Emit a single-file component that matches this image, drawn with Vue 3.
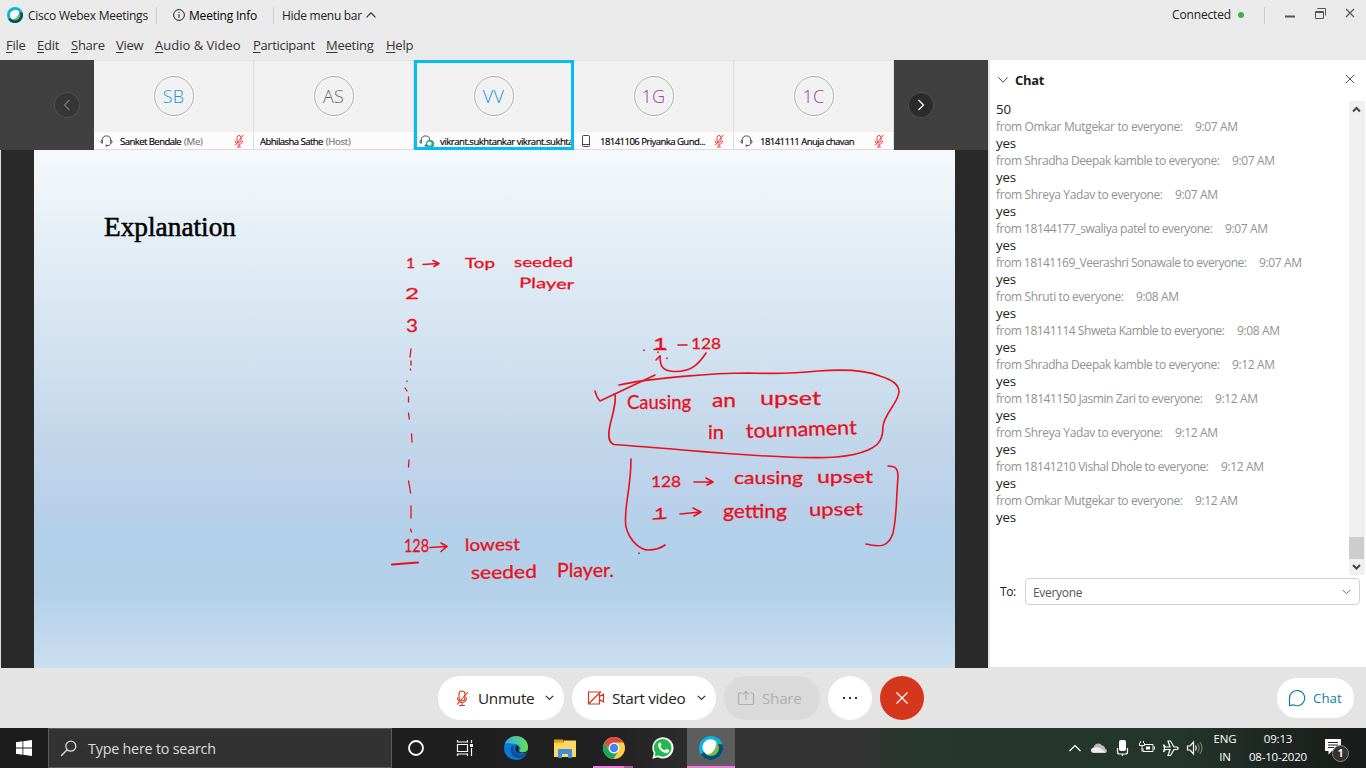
<script setup>
const menus = ['File', 'Edit', 'Share', 'View', 'Audio & Video', 'Participant', 'Meeting', 'Help']
const people = [
  { ini: 'SB', name: 'Sanket Bendale', role: '(Me)', kind: 'headset', tone: 'blue', muted: true },
  { ini: 'AS', name: 'Abhilasha Sathe', role: '(Host)', kind: '', tone: 'grey', muted: false },
  { ini: 'VV', name: 'vikrant.sukhtankar vikrant.sukhta...', role: '', kind: 'headset', tone: 'blue', muted: false, active: true },
  { ini: '1G', name: '18141106 Priyanka Gund...', role: '', kind: 'phone', tone: 'purple', muted: true },
  { ini: '1C', name: '18141111 Anuja chavan', role: '', kind: 'headset', tone: 'purple', muted: true },
]
const chat = [
  ['Omkar Mutgekar', '9:07 AM', 242],
  ['Shradha Deepak kamble', '9:07 AM', 279],
  ['Shreya Yadav', '9:07 AM', 222],
  ['18144177_swaliya patel', '9:07 AM', 272],
  ['18141169_Veerashri Sonawale', '9:07 AM', 306],
  ['Shruti', '9:08 AM', 183],
  ['18141114 Shweta Kamble', '9:08 AM', 284],
  ['Shradha Deepak kamble', '9:12 AM', 279],
  ['18141150 Jasmin Zari', '9:12 AM', 262],
  ['Shreya Yadav', '9:12 AM', 222],
  ['18141210 Vishal Dhole', '9:12 AM', 268],
  ['Omkar Mutgekar', '9:12 AM', 242],
]
// handwritten notes: text, left, baseline, width, size, rotation
const notes = [
  ['1', 406, 267.5, 9, 13, 0], ['Top', 465, 267.5, 30, 14, 0], ['seeded', 514, 267, 59, 14, 0],
  ['Player', 519, 287.5, 55, 14, 2], ['2', 405, 299, 14, 15, 0], ['3', 406, 332, 12, 17, 0],
  ['128', 404, 552, 25, 18, 0], ['lowest', 465, 551, 55, 17, -1], ['seeded', 471, 579, 66, 18, -1],
  ['Player.', 557, 577, 57, 20, 0], ['1', 653, 349, 14, 16, 0], ['128', 691, 349, 30, 16, 0],
  ['Causing', 627, 409, 64, 20, 0], ['an', 712, 407, 24, 19, 0], ['upset', 760, 405, 61, 20, 0],
  ['in', 708, 439, 16, 19, 0], ['tournament', 746, 438, 111, 20, -2],
  ['128', 651, 487, 30, 16, 0], ['causing', 734, 484, 69, 18, 0], ['upset', 817, 483, 56, 18, 0],
  ['1', 654, 518.5, 12, 16, 0], ['getting', 723, 518, 64, 20, 0], ['upset', 809, 516, 54, 18, -1],
]
</script>

<template>
  <div class="screen">
    <header class="title">
      <svg class="logo" width="16" height="16" viewBox="0 0 24 24">
        <circle cx="12" cy="12" r="12" fill="#07b4e4" /><path d="M23.500 8.500A12 12 0 0 1 2 18.600L6 15A8 8 0 0 0 19 8Z" fill="#054c6d" />
        <circle cx="12" cy="12" r="8" fill="#6cc04a" /><path d="M18 6.500A8 8 0 1 0 7 18.200C13 19 18 13 18 6.500Z" fill="#fff" />
      </svg>
      <span class="app">Cisco Webex Meetings</span><i class="vr a"></i>
      <svg class="info" width="12" height="12" viewBox="0 0 12 12" fill="none" stroke="#222"><circle cx="6" cy="6" r="5.400" /><path d="M6 5V9M6 3V4" /></svg>
      <span class="mi">Meeting Info</span><i class="vr b"></i>
      <span class="hide">Hide menu bar</span>
      <svg class="up" width="10" height="6" viewBox="0 0 10 6" fill="none" stroke="#333" stroke-width="1.200"><path d="M.5 5.300 5 .8l4.500 4.500" /></svg>
      <span class="conn">Connected</span><i class="dot"></i><i class="vr c"></i>
      <svg class="win" width="82" height="20" viewBox="1280 4 82 20" fill="none" stroke="#555">
        <path d="M1285 17.500H1295" stroke-width="2" /><path d="M1315.500 12.500h8v7h-8zM1315.500 13.500h8M1317.500 10v-.5h8v7" />
        <path d="M1346 10l8 8M1354 10l-8 8" stroke-width="1.200" />
      </svg>
    </header>
    <nav class="menu"><span v-for="m in menus" :key="m" :class="m.slice(0, 2)"><u>{{ m[0] }}</u>{{ m.slice(1) }}</span></nav>

    <main class="body">
      <section class="left">
        <div class="strip">
          <div class="cap l"><span class="nav"><svg width="26" height="26" viewBox="0 0 26 26" fill="none" stroke="#777" stroke-width="1.200"><path d="M15.500 8 10.500 13l5 5" /></svg></span></div>
          <div v-for="p in people" :key="p.ini" class="tile" :class="{ active: p.active }">
            <div class="ava" :class="p.tone">{{ p.ini }}</div>
            <div class="nm">
              <span class="dev" v-if="p.kind">
                <svg v-if="p.kind === 'headset'" width="13" height="14" viewBox="0 0 14 14" fill="none" stroke="#444">
                  <path d="M2.500 6.500V5.500C2.500 3 4.500 1.500 7 1.500s4.500 1.500 4.500 4V6.500M2.500 6C.5 6.200.5 9.500 2.500 9.500ZM11.500 6c2 .2 2 3.500 0 3.500ZM11.500 9.500C11 11.500 9.500 12 7.500 12" /><circle cx="7" cy="12" r=".7" />
                </svg>
                <svg v-else width="14" height="14" viewBox="0 0 14 14" fill="none" stroke="#444"><rect x="2.500" y="1.500" width="7" height="11" rx="1" /><path d="M2.500 10.500h7" /></svg>
                <svg v-if="p.active" class="mini" width="8" height="8" viewBox="0 0 8 8"><circle cx="4" cy="4" r="4" fill="#0795c4" /><circle cx="4" cy="4" r="2.700" fill="#6cc04a" /><circle cx="3.300" cy="3.500" r="2" fill="#fff" /></svg>
              </span>
              <span class="who">{{ p.name }} <em>{{ p.role }}</em></span>
              <svg v-if="p.muted" class="mute" width="10" height="14" viewBox="0 0 10 14" fill="none" stroke="#e8453c"><rect x="3" y="1.500" width="4" height="7" rx="2" /><path d="M1.200 6.500c0 5 7.600 5 7.600 0M5 10.500V13M3 13h4M1 11.500 9.300 1" /></svg>
            </div>
          </div>
          <div class="cap r"><span class="nav on"><svg width="26" height="26" viewBox="0 0 26 26" fill="none" stroke="#eee" stroke-width="1.400"><path d="M10.500 8l5 5-5 5" /></svg></span></div>
        </div>
        <div class="stage">
          <svg class="slide" viewBox="34 150 921 518" width="921" height="518">
            <defs><linearGradient id="sky" x1="0" y1="0" x2="0" y2="1">
              <stop offset="0" stop-color="#f6f9fc" /><stop offset=".18" stop-color="#e4eef6" /><stop offset=".37" stop-color="#d4e3f1" />
              <stop offset=".54" stop-color="#c4d8eb" /><stop offset=".69" stop-color="#b9d0ea" /><stop offset=".75" stop-color="#b2d0e9" />
              <stop offset=".86" stop-color="#b5d1ea" /><stop offset="1" stop-color="#cbdfef" />
            </linearGradient></defs>
            <rect x="34" y="150" width="921" height="518" fill="url(#sky)" />
            <text class="head" x="104" y="236" textLength="132" lengthAdjust="spacingAndGlyphs">Explanation</text>
            <g class="notes">
              <text v-for="(n, i) in notes" :key="i" :x="n[1]" :y="n[2]" :textLength="n[3]" lengthAdjust="spacingAndGlyphs" :font-size="n[4]" :transform="`rotate(${n[5]} ${n[1]} ${n[2]})`">{{ n[0] }}</text>
            </g>
            <g class="ink">
              <path d="M423 264.500 438 263.500M433 260.500 439 263.500 434 266.500" />
              <path d="M411 349 410 357M411 361v4M410.500 369v1M407 381v.5M405 388l2 3M408.500 397v5M408.500 413l.8 6M411.500 434l.5 8M409 460l-.5 7M408.500 481l2.200 12M411 506v12M410.500 529l1 3" stroke-width="1.300" />
              <path d="M430 547.500 447 546.500M441 543l6 3.500-6 5" /><path d="M392 564.500 418 562.500" stroke-width="2" />
              <path d="M678 345h9M644 350v.5M656 360l4-4M667 358v.5M658 352v.5" />
              <path d="M660 356C660 366 662 371 674 371.500C691 372 698 365 706 353" />
              <path d="M595 391 Q597 398 600 401L655 375" />
              <path d="M619 385C650 378 715 373 748 373C780 374 800 373 818 371C845 369 865 370 880 376C892 380 899 384 899 392C898 403 885 413 883 426C883 438 880 445 868 450C850 458 825 458 800 457.500C740 456 690 450 614 444.500C606 442 609 429 611 421C614 410 617 395 614 394" />
              <path d="M631 459C631 490 623 510 626 527C630 542 641 550 648 550C656 550 661 548 665 545M639 553v.5" />
              <path d="M888 466C896 466 898 469 898 477C896 500 897 515 893 533C889 546 881 548 866 544" />
              <path d="M694 482h18M706 478l7 4-6 3M680 514l20-2M693 508l8 4-7 4M654 349.500h12M653 519l13-1" />
            </g>
          </svg>
        </div>
      </section>

      <aside class="panel">
        <div class="phead"><svg width="10" height="6" viewBox="0 0 10 6" fill="none" stroke="#444"><path d="M.5.5 5 5.200 9.500.5" /></svg><b>Chat</b>
          <svg class="x" width="10" height="10" viewBox="0 0 10 10" fill="none" stroke="#555"><path d="M1 1l8 8M9 1 1 9" /></svg></div>
        <div class="feed">
          <div class="log"><p class="msg">50</p>
            <template v-for="(c, i) in chat" :key="i">
              <svg class="from" width="340" height="17"><text x="0" y="12.500" :textLength="c[2] - 55">from {{ c[0] }} to everyone:</text><text :x="c[2] - 43" y="12.500" textLength="43">{{ c[1] }}</text></svg>
              <p class="msg">yes</p>
            </template>
          </div>
          <div class="bar">
            <svg width="16" height="16" viewBox="0 0 16 16" fill="none" stroke="#444" stroke-width="2"><path d="M4 10.500 7.500 7 11 10.500" /></svg>
            <i></i>
            <svg width="16" height="16" viewBox="0 0 16 16" fill="none" stroke="#444" stroke-width="2"><path d="M4 6 7.500 9.500 11 6" /></svg>
          </div>
        </div>
        <div class="to"><span>To:</span><div class="sel"><span>Everyone</span><svg width="9" height="6" viewBox="0 0 9 6" fill="none" stroke="#666"><path d="M.5.8l4 4 4-4" /></svg></div></div>
      </aside>
    </main>

    <section class="tools">
      <button class="pill un"><svg width="16" height="18" viewBox="0 0 16 18" fill="none" stroke="#d4371c" stroke-width="1.100"><rect x="5" y="2" width="6" height="10" rx="3" /><path d="M3.500 8.500c0 7 9 7 9 0M8 14v2.500M5 16.500h6M3 15.500 14 3" /></svg><span>Unmute</span><svg class="dn" width="9" height="6" viewBox="0 0 9 6" fill="none" stroke="#333" stroke-width="1.200"><path d="M.8.8l3.700 3.700L8.200.8" /></svg></button>
      <button class="pill sv"><svg width="18" height="16" viewBox="0 0 18 16" fill="none" stroke="#d4371c" stroke-width="1.200"><path d="M1.500 2h11v12h-11zM12.500 6.500 16.500 4v8l-4-2.500M1.500 14 14 1.500" /></svg><span>Start video</span><svg class="dn" width="9" height="6" viewBox="0 0 9 6" fill="none" stroke="#333" stroke-width="1.200"><path d="M.8.8l3.700 3.700L8.200.8" /></svg></button>
      <button class="pill sh"><svg width="18" height="16" viewBox="0 0 18 16" fill="none" stroke="#b0b0b0" stroke-width="1.200"><path d="M5 3H2.500Q1.500 3 1.500 4V13.500Q1.500 14.500 2.500 14.500h13q1 0 1-1V4q0-1-1-1H13M9 10V1.500M6 4.300 9 1.300l3 3" /></svg><span>Share</span></button>
      <button class="round"><i></i><i></i><i></i></button>
      <button class="round end"><svg width="14" height="14" viewBox="0 0 14 14" fill="none" stroke="#fff" stroke-width="1.200"><path d="M1.500 1.500l11 11M12.500 1.500l-11 11" /></svg></button>
      <button class="chatbtn"><svg width="18" height="18" viewBox="0 0 18 18" fill="none" stroke="#0f7ea6" stroke-width="1.200"><path d="M1.500 16.500V9A7.600 7.600 0 1 1 5.500 15.800L1.500 16.500Z" /></svg><span>Chat</span></button>
    </section>

    <footer class="task">
      <div class="start"><svg width="16" height="16" viewBox="0 0 16 16" fill="#fff"><path d="M0 2.200 6.500 1.300V7.600H0ZM7.300 1.200 16 0V7.600H7.300ZM0 8.400H6.500V14.700L0 13.800ZM7.300 8.400H16V16L7.300 14.800Z" /></svg></div>
      <div class="search"><svg width="17" height="17" viewBox="0 0 17 17" fill="none" stroke="#ddd" stroke-width="1.300"><circle cx="10.800" cy="6.200" r="5" /><path d="M7.200 9.800 1 16" /></svg><span>Type here to search</span></div>
      <div class="cell cort"><svg width="18" height="18" viewBox="0 0 18 18"><circle cx="9" cy="9" r="7" fill="none" stroke="#fff" stroke-width="1.800" /></svg></div>
      <div class="cell view"><svg width="18" height="16" viewBox="0 0 18 16" fill="none" stroke="#fff" stroke-width="1.200"><path d="M1.500 4.500h10v7h-10zM1.500 0V2h10V0M1.500 16v-2h10v2M15.500 0V3M15.500 8v8" /><path d="M14 5.500h3" stroke-width="3" /></svg></div>
      <div class="cell"><svg width="24" height="24" viewBox="0 0 24 24"><defs><linearGradient id="e1"><stop stop-color="#2fa8e8" /><stop offset="1" stop-color="#68e24a" /></linearGradient></defs><circle cx="12" cy="12" r="12" fill="#0879d4" /><path d="M.5 9C3 1 10-.5 14 .2 20 1 24 6 24 11c0 6-6 7-9 5 3-3 1-8-4-8C5 8 2 6 .5 9Z" fill="url(#e1)" /><path d="M9 9c-5 4-2 12 4 13 4 1 8-2 9.500-5-3 2-8 2-11-1-2-2-2-5-2.500-7Z" fill="#0c4fa0" /><path d="M12 9.500c-2 3 0 7 3 7.500l7 .5 2-3c-4 3-9 2-10 0 2-2 0-5-2-5Z" fill="#1d1d1d" /></svg></div>
      <div class="cell"><svg width="22" height="19" viewBox="0 0 22 19"><path d="M0 .5H9L10 3H22V18H0Z" fill="#e6a100" /><path d="M0 4L10 3.500V1.500H22V18H0Z" fill="#ffd767" /><path d="M4 19V11Q4 10 5 10H17Q18 10 18 11V19H14V15H8V19Z" fill="#3a91dc" /></svg></div>
      <div class="cell chrome"><svg width="22" height="22" viewBox="0 0 22 22"><circle cx="11" cy="11" r="11" fill="#ffd04c" /><path d="M1.500 5.500A11 11 0 0 1 20.500 5.500H11A5.500 5.500 0 0 0 5.700 12Z" fill="#dc4a3f" /><path d="M1.500 5.500A11 11 0 0 0 10.500 22L15.500 14A5.500 5.500 0 0 1 6 13.500Z" fill="#1da362" /><circle cx="11" cy="11" r="5.300" fill="#fff" /><circle cx="11" cy="11" r="4.200" fill="#4285f4" /></svg></div>
      <div class="cell"><svg width="22" height="22" viewBox="0 0 22 22"><path d="M.3 21.700 1.800 16.300A10.600 10.600 0 1 1 5.800 20.200Z" fill="#fff" /><path d="M2.500 19.500 3.500 16A8.800 8.800 0 1 1 6.300 18.500Z" fill="#22b84c" /><path d="M7.500 5.500c-3 2-.5 6.500 2 8.500 3 2.500 6 3 7.500 .5.500-1.500 0-1.500-2.500-2.800-1-.2-1 2-2 1.500-2-.8-3-2-4-3.700-.3-.7 1.200-1 .9-2-.8-2-1-2.300-1.900-2Z" fill="#fff" /></svg></div>
      <div class="cell web"><svg width="24" height="24" viewBox="0 0 24 24"><circle cx="12" cy="12" r="12" fill="#07b4e4" /><path d="M23.500 8.500A12 12 0 0 1 2 18.600L6 15A8 8 0 0 0 19 8Z" fill="#054c6d" /><circle cx="12" cy="12" r="8" fill="#6cc04a" /><path d="M17 5.500A8 8 0 1 0 8 18.500C14 18 18 12 17 5.500Z" fill="#fff" /></svg></div>
      <svg class="tray" width="140" height="40" viewBox="1066 728 140 40" fill="none" stroke="#fff" stroke-width="1.200">
        <path d="M1069.500 751 1075 745.500 1080.500 751" />
        <path d="M1094 753c-4 0-4-5-.5-5.500 1-5 7-5 8.500-2 2 0 3 1.500 3 3 3 1 2 4.500-.5 4.500Z" fill="#bbb" stroke="none" /><path d="M1093 752.500c-3-1-2-5 2-5 4-1 7 2 11 5Z" fill="#eee" stroke="none" />
        <rect x="1119" y="740" width="7" height="11" rx="2" fill="#fff" stroke="none" /><path d="M1117.500 748v4q0 2 2 2h6q2 0 2-2v-4M1122.500 754v2" />
        <path d="M1144 744.500h9v7h-10v-3M1154.500 746.500v3M1139.500 743v2.500h5V743M1140.500 743v-2M1143.500 743v-2M1142 746v5.500" stroke-width="1" /><path d="M1146 746.500h4v3h-4z" fill="#fff" stroke="none" />
        <path d="M1163.500 744.500 1165.500 747H1170L1168 741H1170.500L1174 747H1177Q1179.500 748.200 1177 749.500H1174L1170.500 755.500H1168L1170 749.500H1165.500L1163.500 752 1164.500 748.200Z" />
        <path d="M1187.500 746h2.500l3.500-4v12l-3.500-4h-2.500zM1195.500 745.500q1.500 2.500 0 5" /><path d="M1197.800 743.500q3 4.500 0 9M1200 742q4 6 0 12" stroke="#888" stroke-width="1" />
      </svg>
      <div class="lang"><span>ENG</span><span>IN</span></div>
      <div class="clock"><span class="t">09:13</span><span>08-10-2020</span></div>
      <div class="note"><svg width="16" height="16" viewBox="0 0 16 16"><path d="M0 0H16V12H7L3.500 15.500V12H0Z" fill="#fff" /><path d="M3 3.500H13M3 6H13M3 8.500H9" stroke="#222" /></svg><b>1</b></div>
    </footer>
  </div>
</template>

<style>
body { margin: 0; overflow: hidden; }
</style>
<style scoped>
* { box-sizing: border-box; }
.screen { width: 1366px; height: 768px; display: flex; flex-direction: column; background: #eaeaea; font-family: "Open Sans", "Noto Sans", sans-serif; font-size: 12px; color: #222; overflow: hidden; white-space: nowrap; }
svg { display: block; flex: none; }
button { font: inherit; border: 0; padding: 0; }
.title { height: 30px; display: flex; align-items: center; padding-left: 7px; }
.app { margin-left: 5px; width: 121px; letter-spacing: -.25px; }
.vr { width: 1px; height: 17px; background: #ccc; flex: none; }
.vr.a { margin-left: 7px; }
.info { margin-left: 16px; }
.mi { margin-left: 4px; width: 68px; color: #000; letter-spacing: -.2px; }
.vr.b { margin-left: 16px; }
.hide { margin-left: 8px; width: 80px; letter-spacing: -.3px; }
.up { margin-left: 4px; }
.conn { margin-left: auto; width: 58px; margin-top: -2px; letter-spacing: -.15px; }
.dot { width: 6px; height: 6px; border-radius: 3px; background: #43b049; margin-left: 8px; }
.vr.c { margin-left: 20px; }
.win { margin: -4px 4px 0 15px; }
.menu { height: 30px; display: flex; align-items: center; padding-left: 6px; font-size: 13px; color: #333; letter-spacing: -.25px; }
.menu span { width: 34px; flex: none; }
.menu u { text-underline-offset: 2px; }
.menu .Fi { width: 31px; } .menu .Sh { width: 45px; } .menu .Vi { width: 39px; } .menu .Au { width: 98px; letter-spacing: 0; } .menu .Pa { width: 73px; letter-spacing: -.35px; } .menu .Me { width: 60px; }
.body { height: 608px; display: flex; }
.left { width: 988px; display: flex; flex-direction: column; }
.strip { height: 90px; display: flex; }
.cap { width: 94px; background: #404040; display: flex; align-items: center; }
.cap.l { padding-left: 54px; } .cap.r { padding-left: 14px; }
.nav { width: 26px; height: 26px; border-radius: 13px; background: #363636; box-shadow: inset 0 0 0 1px #505050; }
.nav.on { background: #2b2b2b; }
.tile { width: 160px; background: #f1f1f1; border-right: 1px solid #ddd; border-top: 1px solid #e2e2e2; display: flex; flex-direction: column; align-items: center; position: relative; }
.tile.active::after { content: ""; position: absolute; inset: -1px -1px 0 0; border: 3px solid #05bdf5; }
.ava { margin-top: 15px; width: 40px; height: 40px; border-radius: 20px; border: 1px solid #aaa; box-shadow: 0 0 0 1px #fff, inset 0 0 0 1px #fafafa; display: flex; align-items: center; justify-content: center; font-size: 18px; font-weight: 300; letter-spacing: .3px; }
.blue { color: #2095d5; } .grey { color: #666; } .purple { color: #983fa0; }
.nm { margin-top: auto; width: 100%; height: 18px; background: #fcfcfc; display: flex; align-items: center; font-size: 9.600px; padding: 1px 9px 0 6px; color: #000; border-bottom: 1px solid #ddd; }
.active .nm { padding-left: 5px; }
.active .dev { width: 21px; }
.dev { width: 20px; flex: none; position: relative; }
.tile:nth-child(5) .dev { width: 20px; }
.mini { position: absolute; left: 7px; top: 6px; }
.who { letter-spacing: -.58px; -webkit-text-stroke: .15px; }
.active .who { letter-spacing: -.5px; }
.who em { font-style: normal; color: #777; letter-spacing: -.3px; margin-left: 1px; }
.mute { margin-left: auto; }
.stage { height: 518px; padding-left: 34px; background: linear-gradient(90deg, #ddd 1px, #292929 1px); }
.head { font-family: "Liberation Serif", serif; font-size: 27px; fill: #000; stroke: #000; stroke-width: .5; }
.notes { font-family: Lato, "Open Sans", sans-serif; fill: #e8101c; stroke: #e8101c; stroke-width: .3; }
.ink { fill: none; stroke: #e8101c; stroke-width: 1.600; stroke-linecap: round; stroke-linejoin: round; }
.panel { width: 378px; background: #fff; border-left: 2px solid #e8e8e8; border-bottom: 1px solid #e4e4e4; display: flex; flex-direction: column; }
.phead { height: 40px; display: flex; align-items: center; padding: 0 11px 0 8px; }
.phead b { font-size: 13px; margin-left: 7px; letter-spacing: -.3px; }
.x { margin-left: auto; margin-top: -2px; }
.feed { height: 475px; display: flex; justify-content: space-between; }
.log { padding: 1px 0 0 6px; }
.msg { margin: 0; height: 17px; line-height: 17px; font-size: 13.300px; color: #222; letter-spacing: -.2px; }
.from { fill: #929292; font-size: 12px; }
.bar { width: 16px; margin: 1px 1px 0 0; background: #f0f0f0; display: flex; flex-direction: column; }
.bar i { width: 15px; height: 22px; margin-top: auto; background: #cdcdcd; }
.to { margin-top: 3px; display: flex; align-items: center; padding-left: 10px; }
.to > span { width: 25px; letter-spacing: -.4px; }
.sel { width: 335px; height: 27px; border: 1px solid #d2d2d2; border-radius: 4px; display: flex; justify-content: space-between; align-items: center; padding: 1px 8px 0 7px; color: #555; letter-spacing: -.3px; }
.tools { height: 60px; background: #e4e4e4; display: flex; align-items: center; padding-left: 438px; gap: 8px; font-size: 15.300px; color: #222; }
.pill { height: 44px; border-radius: 22px; background: #fff; display: flex; align-items: center; color: #222; letter-spacing: -.3px; }
.un { width: 126px; padding-left: 16px; } .un span { margin-left: 8px; width: 57px; text-align: left; }
.un .dn { margin-left: 10px; }
.sv { width: 144px; padding-left: 15px; } .sv span { margin-left: 7px; width: 75px; text-align: left; }
.sv .dn { margin-left: 10px; }
.sh { width: 96px; padding-left: 13px; background: #dadada; color: #b0b0b0; } .sh span { margin-left: 7px; }
.round { width: 44px; height: 44px; border-radius: 22px; background: #fff; display: flex; align-items: center; justify-content: center; gap: 4px; }
.round i { width: 2px; height: 2px; background: #333; }
.end { background: #d5371d; }
.chatbtn { margin-left: auto; margin-right: 12px; width: 77px; height: 40px; border-radius: 20px; background: #fff; display: flex; align-items: center; padding-left: 11px; gap: 7px; font-size: 13.300px; color: #0f7ea6; }
.task { height: 40px; display: flex; align-items: center; background: linear-gradient(90deg, #1c1c1c 0, #202020 600px, #333 740px, #333 860px, #26382d 930px, #24352b 1180px, #1d2420 1290px, #181b19 1366px); color: #fff; }
.start { width: 48px; display: flex; justify-content: center; }
.search { width: 344px; height: 40px; background: #323232; border: 1px solid #5a5a5a; display: flex; align-items: center; padding-left: 11px; font-size: 14.300px; color: #ddd; }
.search span { margin-left: 11px; letter-spacing: -.2px; }
.cell { width: 49px; height: 40px; display: flex; align-items: center; justify-content: center; }
.cort { width: 48px; }
.view { margin-right: 2px; }
.chrome { background: linear-gradient(90deg, #ee7bdf 31px, #b255a6 31px) 4px 38px / 40px 2px no-repeat; }
.web { background: #5d5d5d; border-bottom: 2px solid #ee7bdf; width: 48px; padding-top: 2px; }
.tray { margin-left: 331px; }
.lang, .clock { display: flex; flex-direction: column; align-items: center; line-height: 18px; font-size: 11.500px; height: 36px; letter-spacing: -.2px; }
.lang { width: 38px; }
.clock { width: 68px; }
.note { margin-left: 13px; position: relative; width: 39px; padding-bottom: 2px; height: 18px; border: 0; }
.note b { position: absolute; left: 7px; top: 6px; width: 17px; height: 17px; border-radius: 9px; background: #333; border: 1px solid #888; font-size: 10px; line-height: 14px; text-align: center; }
</style>
